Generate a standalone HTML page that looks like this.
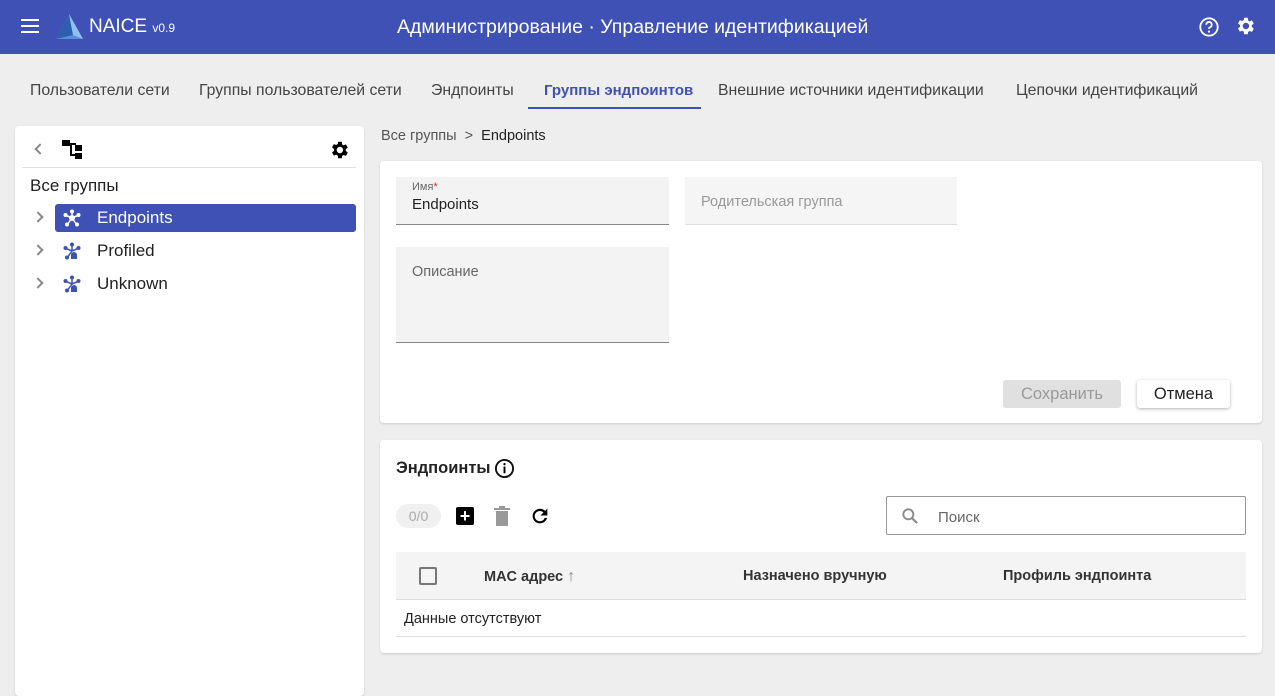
<!DOCTYPE html>
<html><head><meta charset="utf-8"><style>
*{box-sizing:border-box;margin:0;padding:0}
body{width:1275px;height:690px;background:#eeeeee;font-family:"Liberation Sans","DejaVu Sans",sans-serif;position:relative;overflow:hidden;color:#222}
.abs{position:absolute}
.hdr{left:0;top:0;width:1275px;height:54px;background:#3f51b5;color:#fff}
.tab{top:82px;font-size:15.8px;color:#444;white-space:nowrap}
.card{background:#fff;border-radius:4px;box-shadow:0 1px 2px rgba(0,0,0,.15)}
.field{background:#f3f3f3;border-bottom:1px solid #888}
.chev{position:absolute;left:20px;width:8px;height:8px;border-right:2px solid #888;border-top:2px solid #888;transform:rotate(45deg)}
</style></head><body>
<div class="abs hdr">
 <div class="abs" style="left:21px;top:19px;width:18px;height:2px;background:#fff;box-shadow:0 6px 0 #fff,0 12px 0 #fff"></div>
 <svg class="abs" style="left:55px;top:13px" width="29" height="27" viewBox="0 0 29 27"><polygon points="14,1 28,26 1,26" fill="#5b8fd8"/><polygon points="14,1 18,22 1,26" fill="#2d5fae"/><polygon points="14,1 28,26 18,22" fill="#8fc0f0"/></svg>
 <div class="abs" style="left:89px;top:16px;font-size:19px">NAICE <span style="font-size:12px">v0.9</span></div>
 <div class="abs" style="left:397px;top:16px;font-size:19.5px">Администрирование · Управление идентификацией</div>
 <svg class="abs" style="left:1198px;top:16px" width="22" height="22" viewBox="0 0 24 24"><circle cx="12" cy="12" r="9.5" fill="none" stroke="#fff" stroke-width="2"/><path d="M9 9.5a3 3 0 1 1 4 2.8c-.8.4-1 1-1 1.7" fill="none" stroke="#fff" stroke-width="2"/><circle cx="12" cy="17" r="1.2" fill="#fff"/></svg>
 <svg class="abs" style="left:1234px;top:15px" width="22" height="22" viewBox="0 0 24 24"><path fill="#fff" d="M19.4 13a7.5 7.5 0 0 0 0-2l2.1-1.6-2-3.5-2.5 1a7 7 0 0 0-1.7-1L15 3h-4l-.4 2.6a7 7 0 0 0-1.7 1l-2.5-1-2 3.5L6.6 11a7.5 7.5 0 0 0 0 2l-2.2 1.6 2 3.5 2.5-1a7 7 0 0 0 1.7 1L11 21h4l.4-2.6a7 7 0 0 0 1.7-1l2.5 1 2-3.5zM13 15.5a3.5 3.5 0 1 1 0-7 3.5 3.5 0 0 1 0 7z"/></svg>
</div>
<div class="abs tab" style="left:30px">Пользователи сети</div>
<div class="abs tab" style="left:199px">Группы пользователей сети</div>
<div class="abs tab" style="left:431px">Эндпоинты</div>
<div class="abs tab" style="left:544px;color:#3f51b5;font-weight:bold;font-size:15px">Группы эндпоинтов</div>
<div class="abs" style="left:528px;top:107px;width:173px;height:2px;background:#3f51b5"></div>
<div class="abs tab" style="left:718px">Внешние источники идентификации</div>
<div class="abs tab" style="left:1016px">Цепочки идентификаций</div>

<div class="abs card" style="left:15px;top:126px;width:349px;height:570px">
 <div class="abs" style="left:21px;top:19px;width:8px;height:8px;border-left:2px solid #888;border-bottom:2px solid #888;transform:rotate(45deg)"></div>
 <svg class="abs" style="left:47px;top:14px" width="21" height="20" viewBox="0 0 21 20"><rect x="0" y="0" width="8" height="6"/><rect x="8" y="3" width="6" height="2"/><rect x="8" y="3" width="2" height="13"/><rect x="13" y="5" width="7" height="6"/><rect x="13" y="13" width="7" height="6"/><rect x="8" y="14" width="5" height="2"/></svg>
 <svg class="abs" style="left:313px;top:13px" width="22" height="22" viewBox="0 0 24 24"><path d="M19.4 13a7.5 7.5 0 0 0 0-2l2.1-1.6-2-3.5-2.5 1a7 7 0 0 0-1.7-1L15 3h-4l-.4 2.6a7 7 0 0 0-1.7 1l-2.5-1-2 3.5L6.6 11a7.5 7.5 0 0 0 0 2l-2.2 1.6 2 3.5 2.5-1a7 7 0 0 0 1.7 1L11 21h4l.4-2.6a7 7 0 0 0 1.7-1l2.5 1 2-3.5zM13 15.5a3.5 3.5 0 1 1 0-7 3.5 3.5 0 0 1 0 7z"/></svg>
 <div class="abs" style="left:7px;top:41px;width:334px;height:1px;background:#ddd"></div>
 <div class="abs" style="left:15px;top:50px;font-size:17px">Все группы</div>
 <div class="abs" style="left:40px;top:78px;width:301px;height:28px;background:#3f51b5;border-radius:3px"></div>
 <div class="chev" style="top:87px;left:19px"></div>
 <div class="chev" style="top:120px;left:19px"></div>
 <div class="chev" style="top:153px;left:19px"></div>
 <svg class="abs" style="left:48px;top:83px" width="18" height="18" viewBox="0 0 18 18"><g stroke="#fff" stroke-width="1.5"><path d="M9 9L9 2M9 9L2 6M9 9L16 6M9 9L4 16M9 9L14 16"/></g><g fill="#fff"><circle cx="9" cy="9" r="3"/><circle cx="9" cy="2.5" r="2"/><circle cx="2.5" cy="6" r="2"/><circle cx="15.5" cy="6" r="2"/><circle cx="4" cy="15.5" r="2"/><circle cx="14" cy="15.5" r="2"/></g></svg>
 <svg class="abs" style="left:48px;top:116px" width="18" height="18" viewBox="0 0 18 18"><g stroke="#3f51b5" stroke-width="1.5"><path d="M9 9L9 2M9 9L2 6M9 9L16 6M9 9L4 16"/></g><g fill="#3f51b5"><circle cx="9" cy="2.5" r="2"/><circle cx="2.5" cy="6" r="2"/><circle cx="15.5" cy="6" r="2"/><circle cx="4" cy="15.5" r="2"/><path d="M8 17v-4a3 3 0 0 1 6 0v4z"/></g></svg>
 <svg class="abs" style="left:48px;top:149px" width="18" height="18" viewBox="0 0 18 18"><g stroke="#3f51b5" stroke-width="1.5"><path d="M9 9L9 2M9 9L2 6M9 9L16 6M9 9L4 16"/></g><g fill="#3f51b5"><circle cx="9" cy="2.5" r="2"/><circle cx="2.5" cy="6" r="2"/><circle cx="15.5" cy="6" r="2"/><circle cx="4" cy="15.5" r="2"/><path d="M8 17v-4a3 3 0 0 1 6 0v4z"/></g></svg>
 <div class="abs" style="left:82px;top:82px;color:#fff;font-size:17px">Endpoints</div>
 <div class="abs" style="left:82px;top:115px;font-size:17px">Profiled</div>
 <div class="abs" style="left:82px;top:148px;font-size:17px">Unknown</div>
</div>

<div class="abs" style="left:381px;top:128px;font-size:14.5px;color:#555">Все группы &nbsp;&gt;&nbsp; <span style="color:#222">Endpoints</span></div>

<div class="abs card" style="left:380px;top:161px;width:882px;height:262px">
 <div class="abs field" style="left:16px;top:16px;width:273px;height:48px">
  <div class="abs" style="left:16px;top:4px;font-size:11px;color:#666">Имя<span style="color:#d32f2f">*</span></div>
  <div class="abs" style="left:16px;top:19px;font-size:15px">Endpoints</div></div>
 <div class="abs" style="left:305px;top:16px;width:272px;height:48px;background:#f5f5f5;border-bottom:1px solid #ddd">
  <div class="abs" style="left:16px;top:17px;font-size:14.5px;color:#999">Родительская группа</div></div>
 <div class="abs field" style="left:16px;top:86px;width:273px;height:96px">
  <div class="abs" style="left:16px;top:17px;font-size:14.5px;color:#666">Описание</div></div>
 <div class="abs" style="left:623px;top:219px;width:118px;height:28px;background:#e0e0e0;border-radius:3px;color:#999;font-size:16.5px;text-align:center;line-height:29px">Сохранить</div>
 <div class="abs" style="left:757px;top:219px;width:93px;height:28px;background:#fff;border-radius:3px;box-shadow:0 1px 3px rgba(0,0,0,.3);font-size:16.5px;text-align:center;line-height:29px">Отмена</div>
</div>

<div class="abs card" style="left:380px;top:440px;width:882px;height:213px">
 <div class="abs" style="left:16px;top:19px;font-size:16.5px;font-weight:bold">Эндпоинты</div>
 <svg class="abs" style="left:114px;top:18px" width="21" height="21" viewBox="0 0 22 22"><circle cx="11" cy="11" r="9" fill="none" stroke="#111" stroke-width="2"/><rect x="10" y="9" width="2" height="7"/><circle cx="11" cy="6.5" r="1.2"/></svg>
 <div class="abs" style="left:16px;top:64px;width:45px;height:24px;background:#f0f0f0;border-radius:12px;color:#aaa;font-size:14px;text-align:center;line-height:24px">0/0</div>
 <div class="abs" style="left:76px;top:67px;width:18px;height:18px;background:#000;border-radius:2px;color:#fff;font-weight:bold;font-size:18px;line-height:18px;text-align:center">+</div>
 <svg class="abs" style="left:114px;top:66px" width="16" height="20" viewBox="0 0 16 20"><rect x="2" y="5" width="12" height="15" fill="#999"/><rect x="0" y="2" width="16" height="2" fill="#999"/><rect x="5" y="0" width="6" height="2" fill="#999"/></svg>
 <svg class="abs" style="left:149px;top:65px" width="22" height="22" viewBox="0 0 24 24"><path d="M17.6 6.4A8 8 0 1 0 19.7 14h-2.6a5.6 5.6 0 1 1-1.3-5.8L12.5 11.5H20V4z"/></svg>
 <div class="abs" style="left:506px;top:56px;width:360px;height:39px;border:1px solid #999;border-radius:2px">
  <svg class="abs" style="left:13px;top:9px" width="20" height="20" viewBox="0 0 24 24"><circle cx="10" cy="10" r="6" fill="none" stroke="#888" stroke-width="2.2"/><path d="M14.5 14.5l6 6" stroke="#888" stroke-width="2.5"/></svg>
  <div class="abs" style="left:51px;top:12px;font-size:15px;color:#666">Поиск</div></div>
 <div class="abs" style="left:16px;top:112px;width:850px;height:48px;background:#f4f4f4;border-bottom:1px solid #ddd"></div>
 <div class="abs" style="left:39px;top:127px;width:18px;height:18px;border:2px solid #777;border-radius:2px"></div>
 <div class="abs" style="left:104px;top:128px;font-size:14.5px;font-weight:bold;color:#333">MAC адрес <span style="color:#888;font-size:16px">↑</span></div>
 <div class="abs" style="left:363px;top:128px;font-size:14.5px;font-weight:bold;color:#333">Назначено вручную</div>
 <div class="abs" style="left:623px;top:128px;font-size:14.5px;font-weight:bold;color:#333">Профиль эндпоинта</div>
 <div class="abs" style="left:24px;top:171px;font-size:14.5px">Данные отсутствуют</div>
 <div class="abs" style="left:16px;top:196px;width:850px;height:1px;background:#ddd"></div>
</div>
</body></html>
